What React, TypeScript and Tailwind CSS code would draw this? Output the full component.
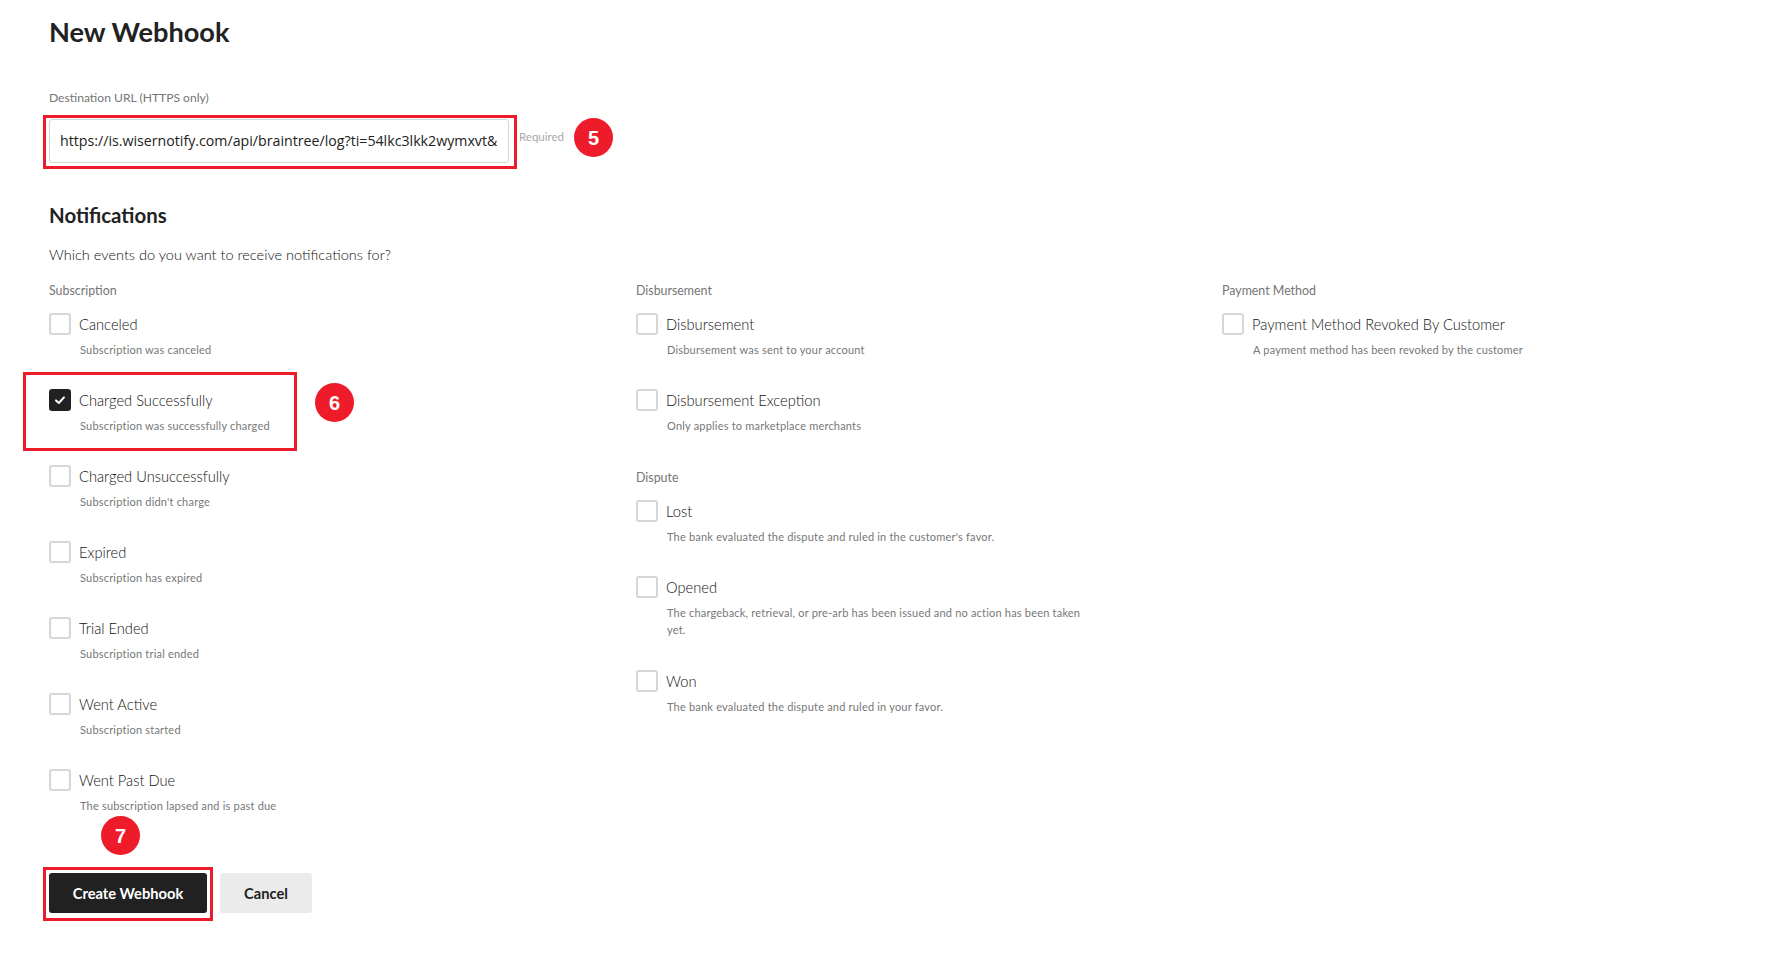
import React from "react";

const lato = "font-['Lato','Noto_Sans',sans-serif]";

function Badge({ n, className }: { n: string; className: string }) {
  return (
    <div
      className={`absolute flex h-[39px] w-[39px] items-center justify-center rounded-full bg-[#ee1c2a] font-['Liberation_Sans',sans-serif] text-[20px] font-bold text-white ${className}`}
    >
      {n}
    </div>
  );
}

function Item({ title, desc, checked }: { title: string; desc: string; checked?: boolean }) {
  return (
    <div className="flex items-start pb-[31px]">
      <div
        className={`flex h-[22px] w-[22px] shrink-0 items-center justify-center rounded-[3px] border-2 ${
          checked ? "border-[#212121] bg-[#212121]" : "border-[#d6d6d6] bg-white"
        }`}
      >
        {checked && (
          <svg width="14" height="14" viewBox="0 0 14 14" fill="none">
            <path d="M3 7.4 L5.8 10 L11 4.4" stroke="white" strokeWidth="2" strokeLinecap="round" strokeLinejoin="round" />
          </svg>
        )}
      </div>
      <div className="ml-[8px] w-[430px]">
        <div className="mt-[1px] text-[14.7px] font-light leading-[21px] text-[#111111]">{title}</div>
        <div className="mt-[6px] pl-[1px] text-[11px] leading-[17px] tracking-[0.2px] text-[#777777]">{desc}</div>
      </div>
    </div>
  );
}

function GroupLabel({ children }: { children: React.ReactNode }) {
  return <div className="h-[31px] text-[12.4px] leading-[18px] text-[#757575]">{children}</div>;
}

const subscription = [
  ["Canceled", "Subscription was canceled"],
  ["Charged Successfully", "Subscription was successfully charged"],
  ["Charged Unsuccessfully", "Subscription didn't charge"],
  ["Expired", "Subscription has expired"],
  ["Trial Ended", "Subscription trial ended"],
  ["Went Active", "Subscription started"],
  ["Went Past Due", "The subscription lapsed and is past due"],
];

export default function App() {
  return (
    <div className={`relative h-[977px] w-[1788px] overflow-hidden bg-white pl-[49px] ${lato}`}>
      <h1 className="pt-[15px] text-[27.2px] font-bold leading-[34px] text-[#222222]">New Webhook</h1>

      <div className="mt-[40px] h-[18px] text-[12.1px] leading-[18px] text-[#757575]">Destination URL (HTTPS only)</div>

      <div className="mt-[12px] flex items-center">
        <div className="flex h-[44px] w-[460px] items-center rounded-[3px] border border-[#d4d4d4] pl-[10px] font-['Open_Sans',sans-serif] text-[14.2px] whitespace-nowrap text-[#222222]">
          https://is.wisernotify.com/api/braintree/log?ti=54lkc3lkk2wymxvt&amp;
        </div>
        <span className="ml-[10px] mb-[8px] text-[11.5px] text-[#a8a8a8]">Required</span>
      </div>

      <h2 className="mt-[38px] text-[20.4px] font-bold leading-[28px] text-[#222222]">Notifications</h2>
      <p className="mt-[15px] text-[14.55px] font-light leading-[22px] text-[#111111]">Which events do you want to receive notifications for?</p>

      <div className="mt-[16px] grid grid-cols-[587px_586px_1fr]">
        <div>
          <GroupLabel>Subscription</GroupLabel>
          {subscription.map(([t, d], i) => (
            <Item key={t} title={t} desc={d} checked={i === 1} />
          ))}
        </div>
        <div>
          <GroupLabel>Disbursement</GroupLabel>
          <Item title="Disbursement" desc="Disbursement was sent to your account" />
          <Item title="Disbursement Exception" desc="Only applies to marketplace merchants" />
          <div className="mt-[4px]">
            <GroupLabel>Dispute</GroupLabel>
          </div>
          <Item title="Lost" desc="The bank evaluated the dispute and ruled in the customer's favor." />
          <Item title="Opened" desc="The chargeback, retrieval, or pre-arb has been issued and no action has been taken yet." />
          <div className="mt-[1px]">
            <Item title="Won" desc="The bank evaluated the dispute and ruled in your favor." />
          </div>
        </div>
        <div>
          <GroupLabel>Payment Method</GroupLabel>
          <Item title="Payment Method Revoked By Customer" desc="A payment method has been revoked by the customer" />
        </div>
      </div>

      <div className="mt-[28px] flex gap-[13px]">
        <button className="h-[40px] w-[158px] rounded-[3px] bg-[#212121] text-[14.7px] font-bold text-white">Create Webhook</button>
        <button className="h-[40px] w-[92px] rounded-[3px] bg-[#ebebeb] text-[14.7px] font-bold text-[#222222]">Cancel</button>
      </div>

      <div className="absolute left-[43px] top-[115px] h-[54px] w-[474px] border-[3px] border-[#ee1c2a]" />
      <div className="absolute left-[23px] top-[372px] h-[79px] w-[274px] border-[3px] border-[#ee1c2a]" />
      <div className="absolute left-[43px] top-[867px] h-[54px] w-[170px] border-[3px] border-[#ee1c2a]" />
      <Badge n="5" className="left-[574px] top-[118px]" />
      <Badge n="6" className="left-[315px] top-[383px]" />
      <Badge n="7" className="left-[101px] top-[816px]" />
    </div>
  );
}
